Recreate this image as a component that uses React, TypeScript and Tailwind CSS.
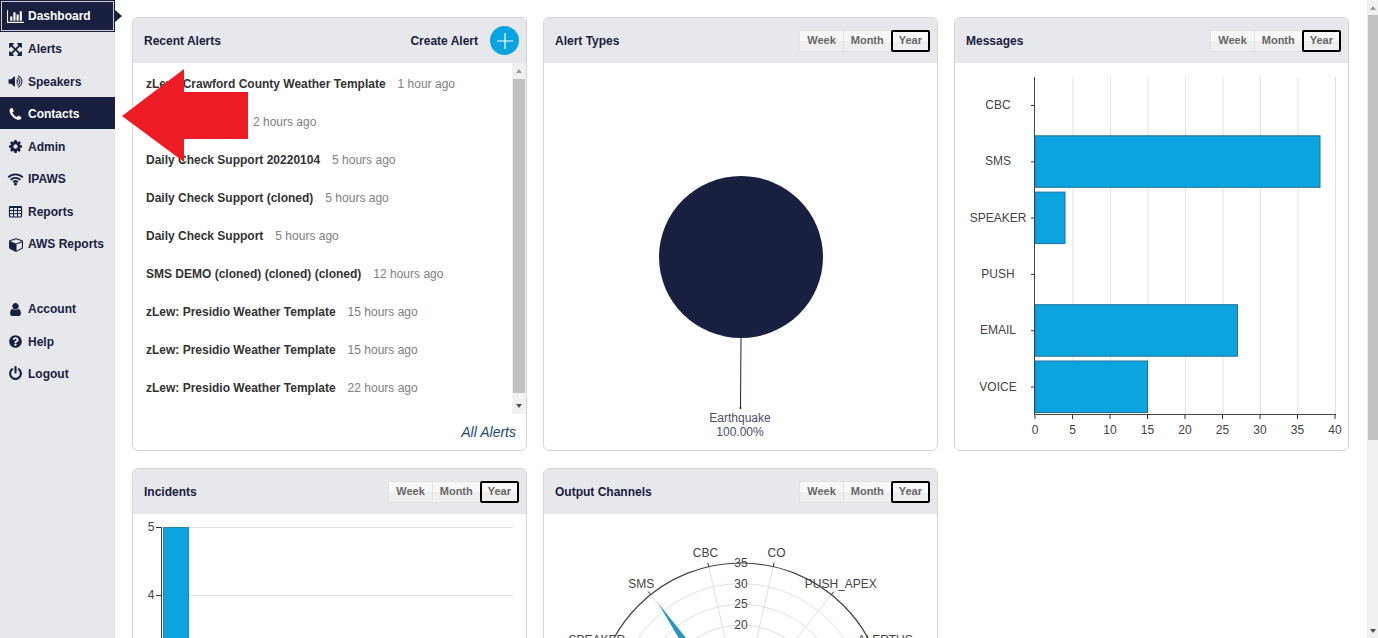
import { type ReactNode, useState } from 'react';
import { clsx } from 'clsx';
import { FaQuestionCircle } from 'react-icons/fa';

interface AlertItem {
  name: string;
  time: string;
}

interface NavItem {
  label: string;
  icon: ReactNode;
}

const iconPaths = {
  alerts: 'M1411 541l-355 355 355 355 144-144q29-31 70-14 39 17 39 59v448q0 26-19 45t-45 19h-448q-42 0-59-40-17-39 14-69l144-144-355-355-355 355 144 144q31 30 14 69-17 40-59 40h-448q-26 0-45-19t-19-45v-448q0-42 40-59 39-17 69 14l144 144 355-355-355-355-144 144q-19 19-45 19-12 0-24-5-40-17-40-59v-448q0-26 19-45t45-19h448q42 0 59 40 17 39-14 69l-144 144 355 355 355-355-144-144q-31-30-14-69 17-40 59-40h448q26 0 45 19t19 45v448q0 42-39 59-13 5-25 5-26 0-45-19z',
  speakers: 'M832 352v1088q0 26-19 45t-45 19-45-19l-333-333h-262q-26 0-45-19t-19-45v-384q0-26 19-45t45-19h262l333-333q19-19 45-19t45 19 19 45zm384 544q0 76-42.5 141.5t-112.5 93.5q-10 5-25 5-26 0-45-18.5t-19-45.5q0-21 12-35.5t29-25 34-23 29-36 12-56.5-12-56.5-29-36-34-23-29-25-12-35.5q0-27 19-45.5t45-18.5q15 0 25 5 70 27 112.5 93t42.5 142zm256 0q0 153-85 282.5t-225 188.5q-13 5-25 5-27 0-46-19t-19-45q0-39 39-59 56-29 76-44 74-54 115.5-135.5t41.5-173.5-41.5-173.5-115.5-135.5q-20-15-76-44-39-20-39-59 0-26 19-45t45-19q13 0 26 5 140 59 225 188.5t85 282.5zm256 0q0 230-127 422.5t-338 283.5q-13 5-26 5-26 0-45-19t-19-45q0-36 39-59 7-4 22.5-10.5t22.5-10.5q46-25 82-51 123-91 192-227t69-289-69-289-192-227q-36-26-82-51-7-4-22.5-10.5t-22.5-10.5q-39-23-39-59 0-26 19-45t45-19q13 0 26 5 211 91 338 283.5t127 422.5z',
  phone: 'M1600 1240q0 27-10 70.5t-21 68.5q-21 50-122 106-94 51-186 51-27 0-53-3.5t-57.5-12.5-47-14.5-55.5-20.5-49-18q-98-35-175-83-127-79-264-216t-216-264q-48-77-83-175-3-9-18-49t-20.5-55.5-14.5-47-12.5-57.5-3.5-53q0-92 51-186 56-101 106-122 25-11 68.5-21t70.5-10q14 0 21 3 18 6 53 76 11 19 30 54t35 63.5 31 53.5q3 4 17.5 25t21.5 35.5 7 28.5q0 20-28.5 50t-62 55-62 53-28.5 46q0 9 5 22.5t8.5 20.5 14 24 11.5 19q76 137 174 235t235 174q2 1 19 11.5t24 14 20.5 8.5 22.5 5q18 0 46-28.5t53-62 55-62 50-28.5q14 0 28.5 7t35.5 21.5 25 17.5q25 15 53.5 31t63.5 35 54 30q70 35 76 53 3 7 3 21z',
  cog: 'M1152 896q0-106-75-181t-181-75-181 75-75 181 75 181 181 75 181-75 75-181zm512-109v222q0 12-8 23t-20 13l-185 28q-19 54-39 91 35 50 107 138 10 12 10 25t-9 23q-27 37-99 108t-94 71q-12 0-26-9l-138-108q-44 23-91 38-16 136-29 186-7 28-36 28h-222q-14 0-24.5-8.5t-11.5-21.5l-28-184q-49-16-90-37l-141 107q-10 9-25 9-14 0-25-11-126-114-165-168-7-10-7-23 0-12 8-23 15-21 51-66.5t54-70.5q-27-50-41-99l-183-27q-13-2-21-12.5t-8-23.5v-222q0-12 8-23t19-13l186-28q14-46 39-92-40-57-107-138-10-12-10-24 0-10 9-23 26-36 98.5-107.5t94.5-71.5q13 0 26 10l138 107q44-23 91-38 16-136 29-186 7-28 36-28h222q14 0 24.5 8.5t11.5 21.5l28 184q49 16 90 37l142-107q9-9 24-9 13 0 25 10 129 119 165 170 7 8 7 22 0 12-8 23-15 21-51 66.5t-54 70.5q26 50 41 98l183 28q13 2 21 12.5t8 23.5z',
  cube: 'M896 1629l640-349v-636l-640 233v752zm-64-865l698-254-698-254-698 254zm832-252v768q0 35-18 65t-49 47l-704 384q-28 16-61 16t-61-16l-704-384q-31-17-49-47t-18-65v-768q0-40 23-73t61-47l704-256q22-8 44-8t44 8l704 256q38 14 61 47t23 73z',
  user: 'M1536 1399q0 109-62.5 187t-150.5 78h-854q-88 0-150.5-78t-62.5-187q0-85 8.5-160.5t31.5-152 58.5-131 94-89 134.5-34.5q131 128 313 128t313-128q76 0 134.5 34.5t94 89 58.5 131 31.5 152 8.5 160.5zm-256-887q0 159-112.5 271.5t-271.5 112.5-271.5-112.5-112.5-271.5 112.5-271.5 271.5-112.5 271.5 112.5 112.5 271.5z',
  power: 'M1664 896q0 156-61 298t-164 245-245 164-298 61-298-61-245-164-164-245-61-298q0-182 80.5-343t226.5-270q43-32 95.5-25t83.5 50q32 42 24.5 94.5t-49.5 84.5q-98 74-151.5 181t-53.5 228q0 104 40.5 198.5t109.5 163.5 163.5 109.5 198.5 40.5 198.5-40.5 163.5-109.5 109.5-163.5 40.5-198.5q0-121-53.5-228t-151.5-181q-42-32-49.5-84.5t24.5-94.5q31-43 84-50t95 25q146 109 226.5 270t80.5 343zm-640-768v640q0 52-38 90t-90 38-90-38-38-90v-640q0-52 38-90t90-38 90 38 38 90z',
};

const Glyph = ({ d }: { d: string }) => (
  <svg viewBox="0 0 1792 1792" className="size-[15px] shrink-0 fill-current"><path d={d} /></svg>
);

const ChartIcon = () => (
  <svg viewBox="0 0 2048 1792" className="h-[15px] w-[17px] shrink-0 fill-current">
    <path d="M640 896v512h-256v-512h256zM1024 384v1024h-256v-1024h256zM2048 1536v128h-2048v-1536h128v1408h1920zM1408 640v768h-256v-768h256zM1792 256v1152h-256v-1152h256z" />
  </svg>
);

const WifiIcon = () => (
  <svg viewBox="0 0 17 15" className="h-[15px] w-[17px] shrink-0 fill-none stroke-current" strokeWidth="1.7">
    <path d="M1.2 5.4a10.4 10.4 0 0 1 14.6 0M3.6 7.8a7 7 0 0 1 9.8 0M6 10.2a3.6 3.6 0 0 1 5 0" />
    <circle cx="8.5" cy="11.9" r="0.7" />
  </svg>
);

const TableIcon = () => (
  <svg viewBox="0 0 15 15" className="size-[15px] shrink-0 fill-none stroke-current">
    <rect x="1.5" y="2.5" width="12" height="10.5" rx="1" strokeWidth="1.2" />
    <path d="M1.5 3h12" strokeWidth="2" />
    <path d="M1.5 6.5h12M1.5 9.7h12M5.5 3v10M9.5 3v10" />
  </svg>
);

const CubeIcon = () => (
  <svg viewBox="0 0 1664 1792" className="h-[15px] w-[14px] shrink-0 fill-current"><path d={iconPaths.cube} /></svg>
);

const navItems: (NavItem | null)[] = [
  { label: 'Dashboard', icon: <ChartIcon /> },
  { label: 'Alerts', icon: <Glyph d={iconPaths.alerts} /> },
  { label: 'Speakers', icon: <Glyph d={iconPaths.speakers} /> },
  { label: 'Contacts', icon: <Glyph d={iconPaths.phone} /> },
  { label: 'Admin', icon: <Glyph d={iconPaths.cog} /> },
  { label: 'IPAWS', icon: <WifiIcon /> },
  { label: 'Reports', icon: <TableIcon /> },
  { label: 'AWS Reports', icon: <CubeIcon /> },
  null,
  { label: 'Account', icon: <Glyph d={iconPaths.user} /> },
  { label: 'Help', icon: <FaQuestionCircle className="size-[13px]" /> },
  { label: 'Logout', icon: <Glyph d={iconPaths.power} /> },
];

const alerts: AlertItem[] = [
  { name: 'zLew: Crawford County Weather Template', time: '1 hour ago' },
  { name: '', time: '2 hours ago' },
  { name: 'Daily Check Support 20220104', time: '5 hours ago' },
  { name: 'Daily Check Support (cloned)', time: '5 hours ago' },
  { name: 'Daily Check Support', time: '5 hours ago' },
  { name: 'SMS DEMO (cloned) (cloned) (cloned)', time: '12 hours ago' },
  { name: 'zLew: Presidio Weather Template', time: '15 hours ago' },
  { name: 'zLew: Presidio Weather Template', time: '15 hours ago' },
  { name: 'zLew: Presidio Weather Template', time: '22 hours ago' },
];

const messages = [
  { channel: 'CBC', count: 0 },
  { channel: 'SMS', count: 38 },
  { channel: 'SPEAKER', count: 4 },
  { channel: 'PUSH', count: 0 },
  { channel: 'EMAIL', count: 27 },
  { channel: 'VOICE', count: 15 },
];

// one entry per polar sector, clockwise from the top
const channels = ['CO', 'PUSH_APEX', 'ALERTUS', '', '', '', '', '', '', '', '', 'SPEAKER', 'SMS', 'CBC'];

function Sidebar() {
  return (
    <aside className="relative w-[115px] shrink-0 bg-[#e7e8ec]">
      <nav className="flex h-[389px] flex-col justify-between">
        {navItems.map((item, i) => {
          if (!item) return <div key={i} className="h-8" />;
          const active = item.label === 'Dashboard';
          return (
            <a
              key={item.label}
              href="#"
              className={clsx(
                'relative flex h-8 shrink-0 items-center gap-1 text-xs font-bold',
                active || item.label === 'Contacts' ? 'bg-[#19203f] text-white' : 'text-[#19203f]',
                active ? 'border border-[#19203f] pl-[6px] ring-1 ring-inset ring-[#c9cbd4]' : 'pt-0.5 pl-[7px]'
              )}
            >
              <span className="flex w-[17px] items-center justify-center">{item.icon}</span>
              {item.label}
              {active && (
                <svg viewBox="0 0 7 12" className="absolute top-[9px] -right-2 h-3 w-[7px] fill-[#19203f]">
                  <path d="M0 0l7 6-7 6z" />
                </svg>
              )}
            </a>
          );
        })}
      </nav>
    </aside>
  );
}

function PeriodButtons() {
  const [period, setPeriod] = useState('Year');
  return (
    <div className="flex h-[22px] border-l border-white text-[11px] font-bold text-[#666]">
      {['Week', 'Month', 'Year'].map(p => (
        <button
          key={p}
          type="button"
          onClick={() => setPeriod(p)}
          className={clsx(
            '-ml-px bg-linear-to-b from-[#f8f8f8] from-50% to-[#efefef] to-50%',
            p === period ? 'rounded-xs border-2 border-black px-[6px]' : 'border border-[#e2e2e4] px-[7px]'
          )}
        >
          {p}
        </button>
      ))}
    </div>
  );
}

function Card({ title, action, children }: { title: string; action?: ReactNode; children: ReactNode }) {
  return (
    <section className="flex h-[434px] min-w-0 flex-col overflow-hidden rounded-md border border-[#d3d4da] bg-white">
      <header className="flex h-[45px] shrink-0 items-center justify-between bg-[#e7e8ec] pr-[7px] pl-[11px]">
        <h2 className="text-xs font-bold text-[#19203f]">{title}</h2>
        {action ?? <PeriodButtons />}
      </header>
      {children}
    </section>
  );
}

const ScrollArrow = ({ down, dark }: { down?: boolean; dark?: boolean }) => (
  <svg viewBox="0 0 6 4" className={clsx('h-1 w-1.5', dark ? 'fill-[#505050]' : 'fill-[#9a9a9a]')}>
    <path d={down ? 'M0 0h6L3 4z' : 'M0 4h6L3 0z'} />
  </svg>
);

function RecentAlerts() {
  return (
    <Card
      title="Recent Alerts"
      action={
        <button type="button" className="flex items-center gap-3 text-xs font-bold text-[#19203f]">
          Create Alert
          <span className="flex size-[29px] items-center justify-center rounded-full bg-[#0ba4e0]">
            <svg viewBox="0 0 16 16" className="size-4 stroke-white"><path d="M8 0v16M0 8h16" strokeWidth="1.2" /></svg>
          </span>
        </button>
      }
    >
      <div className="flex h-[351px] shrink-0 overflow-hidden">
        <ul className="min-w-0 flex-1 pt-0.5 pl-[13px]">
          {alerts.map((alert, i) => (
            <li key={i} className="flex h-[38px] items-center gap-3 text-xs whitespace-nowrap">
              {alert.name ? <span className="font-bold text-[#333]">{alert.name}</span> : <span className="w-[95px]" />}
              <span className="text-[#808080]">{alert.time}</span>
            </li>
          ))}
        </ul>
        <div className="flex w-[14px] flex-col items-center bg-[#f1f1f1]">
          <div className="flex h-4 items-center"><ScrollArrow /></div>
          <div className="h-[314px] w-3 bg-[#c1c1c1]" />
          <div className="flex flex-1 items-center pt-1"><ScrollArrow down dark /></div>
        </div>
      </div>
      <a href="#" className="mr-[10px] flex flex-1 items-center self-end text-sm text-[#1c4a75] italic">All Alerts</a>
    </Card>
  );
}

function AlertTypesChart() {
  return (
    <svg viewBox="0 -1 393 387" className="w-full fill-[#4c4f68] text-xs">
      <ellipse cx="197" cy="193" rx="82" ry="81" fill="#19203f" />
      <path d="M197 274L196.5 344" stroke="#19203f" />
      <circle cx="196.5" cy="344" r="1" fill="#19203f" />
      <text x="196" y="358" textAnchor="middle">Earthquake</text>
      <text x="196" y="372" textAnchor="middle">100.00%</text>
    </svg>
  );
}

function MessagesChart() {
  const ticks = [0, 5, 10, 15, 20, 25, 30, 35, 40];
  return (
    <svg viewBox="0 -1 393 387" className="w-full fill-[#444] text-xs">
      {ticks.slice(1).map(t => (
        <path key={t} d={`M${80.5 + t * 7.5} 13V350`} stroke="#e0e0e0" />
      ))}
      {messages.map((m, i) => (
        <g key={m.channel}>
          {m.count > 0 && (
            <rect x="80" y={15.5 + i * 56.3} width={m.count * 7.5} height="51.5" fill="#0ba4e0" stroke="#1f7199" />
          )}
          <path d={`M76 ${41.5 + i * 56.3}h4`} stroke="#333" />
          <text x="43" y={45 + i * 56.3} textAnchor="middle">{m.channel}</text>
        </g>
      ))}
      <path d="M79.5 13V350.5H381" fill="none" stroke="#444" />
      {ticks.map(t => (
        <g key={t}>
          <path d={`M${80 + t * 7.5} 350v5`} stroke="#333" />
          <text x={80 + t * 7.5} y="370" textAnchor="middle">{t}</text>
        </g>
      ))}
    </svg>
  );
}

function IncidentsChart() {
  const step = 68;
  return (
    <svg viewBox="0 -1 393 387" className="w-full fill-[#444] text-xs">
      {[5, 4].map((n, i) => (
        <g key={n}>
          <path d={`M28 ${12.5 + i * step}H380`} stroke="#e0e0e0" />
          <path d={`M23 ${12.5 + i * step}h5`} stroke="#333" />
          <text x="18" y={16 + i * step} textAnchor="middle">{n}</text>
        </g>
      ))}
      <path d="M28.5 12V353" stroke="#444" />
      <rect x="30.5" y="12.5" width="25" height="340" fill="#0ba4e0" stroke="#1f86b5" />
    </svg>
  );
}

function OutputChannelsChart() {
  const cx = 197;
  const cy = 193;
  const radius = 145;
  const point = (i: number, r: number) => {
    const a = ((i + 0.5) * 2 * Math.PI) / channels.length;
    return [cx + r * Math.sin(a), cy - r * Math.cos(a)];
  };
  return (
    <svg viewBox="0 -1 393 387" className="w-full fill-[#444] text-xs">
      {[5, 10, 15, 20, 25, 30].map(v => (
        <circle key={v} cx={cx} cy={cy} r={(v * radius) / 35} fill="none" stroke="#e0e0e0" />
      ))}
      {channels.map((_, i) => (
        <path key={i} d={`M${cx} ${cy}L${point(i, radius)}`} stroke="#e0e0e0" />
      ))}
      <path d="M114 88L176 193H197L142 123Z" fill="#2795bd" />
      <circle cx={cx} cy={cy} r={radius} fill="none" stroke="#444" strokeWidth="1.2" />
      {channels.map((name, i) => {
        const [x, y] = point(i, radius + 15);
        return (
          <g key={i}>
            <path d={`M${point(i, radius)}L${point(i, radius + 4)}`} stroke="#333" />
            {name && <text x={x} y={y + 5} textAnchor="middle">{name}</text>}
          </g>
        );
      })}
      {[35, 30, 25, 20].map(v => (
        <text key={v} x={cx} y={cy + 4 - (v * radius) / 35} textAnchor="middle">{v}</text>
      ))}
    </svg>
  );
}

export default function App() {
  return (
    <div className="relative flex h-screen overflow-hidden bg-white font-['Liberation_Sans',Arial,sans-serif]">
      <Sidebar />
      <main className="grid flex-1 grid-cols-3 content-start gap-x-4 gap-y-[17px] overflow-hidden pt-[17px] pr-[18px] pl-[17px]">
        <RecentAlerts />
        <Card title="Alert Types"><AlertTypesChart /></Card>
        <Card title="Messages"><MessagesChart /></Card>
        <Card title="Incidents"><IncidentsChart /></Card>
        <Card title="Output Channels"><OutputChannelsChart /></Card>
      </main>
      <div className="flex w-[11px] shrink-0 flex-col items-center bg-[#f1f1f1]">
        <div className="flex h-[15px] items-center pl-px"><ScrollArrow /></div>
        <div className="h-2/3 w-full pl-px"><div className="h-full bg-[#c1c1c1]" /></div>
        <div className="mt-auto flex h-[15px] items-center"><ScrollArrow down dark /></div>
      </div>
      {/* pointer to the Contacts entry */}
      <svg viewBox="0 0 126 93" className="pointer-events-none absolute top-[69px] left-[122px] h-[93px] w-[126px] fill-[#ed1c24]">
        <path d="M0 47L62 0V23H126V70H62V93Z" />
      </svg>
    </div>
  );
}
